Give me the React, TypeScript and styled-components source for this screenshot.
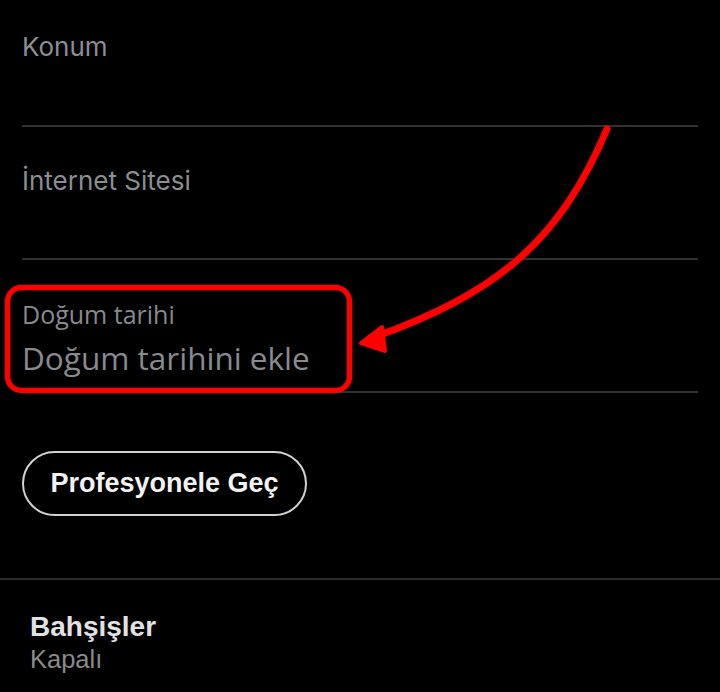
import React from 'react';
import styled, { createGlobalStyle } from 'styled-components';

const GlobalStyle = createGlobalStyle`
    html, body {
        margin: 0;
        padding: 0;
        background: #000000;
    }
`;

const Page = styled.div`
    position: relative;
    width: 720px;
    height: 692px;
    overflow: hidden;
    background: #000000;
`;

const Form = styled.div`
    padding: 0 22px;
`;

const Field = styled.div<{ $height: number; $top: number }>`
    box-sizing: border-box;
    height: ${(p) => p.$height}px;
    padding-top: ${(p) => p.$top}px;
    border-bottom: 2px solid #2f3336;
`;

const Label = styled.div`
    font-family: Inter, 'Noto Sans', sans-serif;
    font-size: 26px;
    line-height: 30px;
    color: #8b8e93;
`;

const SmallLabel = styled.div`
    font-family: 'Open Sans', 'Noto Sans', sans-serif;
    font-size: 25px;
    line-height: 30px;
    color: #878a8f;
`;

const Placeholder = styled.div`
    font-family: 'Open Sans', 'Noto Sans', sans-serif;
    font-size: 31.5px;
    line-height: 40px;
    margin-top: 9px;
    color: #878a8f;
`;

const ButtonRow = styled.div`
    padding: 58px 0 62px;
`;

const OutlineButton = styled.button`
    box-sizing: border-box;
    width: 285px;
    height: 65px;
    padding: 0;
    border: 2px solid #cfd3d6;
    border-radius: 33px;
    background: transparent;
    color: #f2f2f2;
    font-family: 'Liberation Sans', Arial, sans-serif;
    font-weight: 700;
    font-size: 27px;
    cursor: pointer;
`;

const Divider = styled.hr`
    margin: 0;
    border: 0;
    border-top: 2px solid #2a2c2e;
`;

const TipRow = styled.div`
    padding: 31px 30px 0;
`;

const TipTitle = styled.div`
    font-family: 'Liberation Sans', Arial, sans-serif;
    font-weight: 700;
    font-size: 28px;
    line-height: 32px;
    color: #e2e2e2;
`;

const TipStatus = styled.div`
    font-family: 'Liberation Sans', Arial, sans-serif;
    font-size: 25.5px;
    line-height: 32px;
    color: #8a8a8a;
`;

const Annotation = styled.svg`
    position: absolute;
    left: 0;
    top: 0;
    pointer-events: none;
`;

const App = () => {
    return (
        <Page>
            <GlobalStyle />
            <Form>
                <Field $height={127} $top={32}>
                    <Label>Konum</Label>
                </Field>
                <Field $height={133} $top={39}>
                    <Label>İnternet Sitesi</Label>
                </Field>
                <Field $height={133} $top={39}>
                    <SmallLabel>Doğum tarihi</SmallLabel>
                    <Placeholder>Doğum tarihini ekle</Placeholder>
                </Field>
                <ButtonRow>
                    <OutlineButton>Profesyonele Geç</OutlineButton>
                </ButtonRow>
            </Form>
            <Divider />
            <TipRow>
                <TipTitle>Bahşişler</TipTitle>
                <TipStatus>Kapalı</TipStatus>
            </TipRow>

            {/* red highlight drawn over the screenshot */}
            <Annotation width="720" height="692" viewBox="0 0 720 692">
                <rect x="7.5" y="287.5" width="342" height="103" rx="14" fill="none" stroke="#ff0000" strokeWidth="5.5" />
                <path
                    d="M607 129 C 560 240, 500 292, 372 338"
                    fill="none"
                    stroke="#ff0000"
                    strokeWidth="7"
                    strokeLinecap="round"
                />
                <path d="M361 343 L 382 327 L 385 351 Z" fill="#ff0000" stroke="#ff0000" strokeWidth="4" strokeLinejoin="round" />
            </Annotation>
        </Page>
    );
};

export default App;
